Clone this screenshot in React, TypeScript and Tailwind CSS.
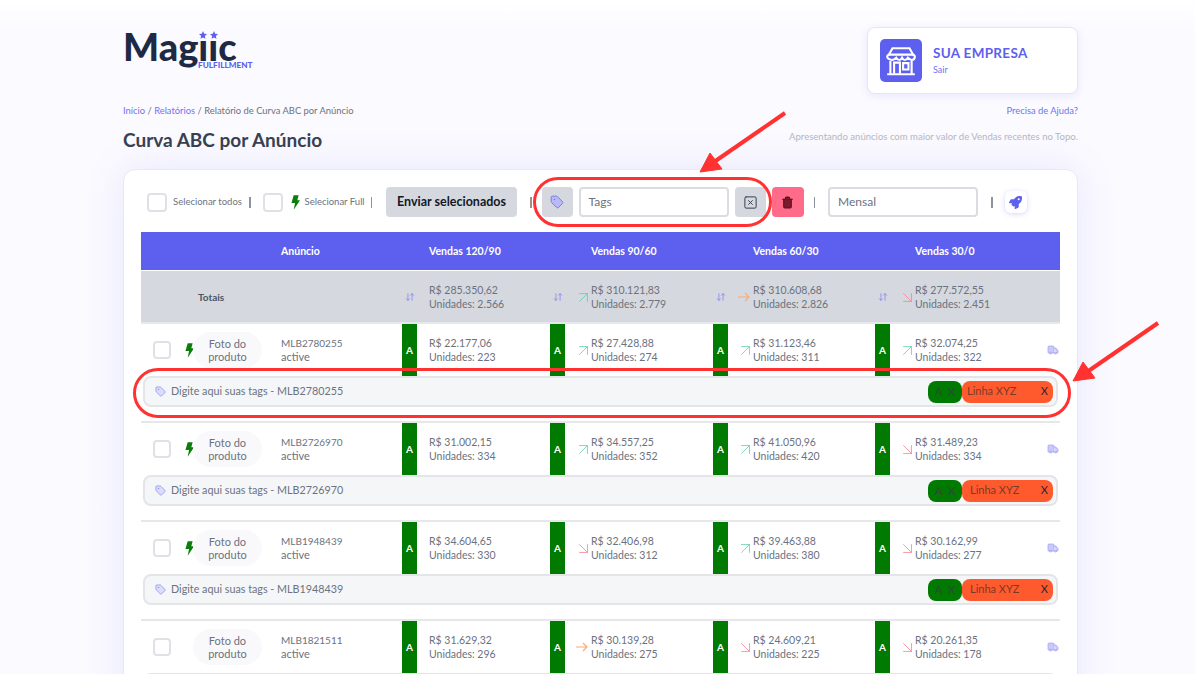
import { Tag, SquareX, Trash2, Truck, ArrowUpRight, ArrowDownRight, ArrowDownUp } from "lucide-react";
import { FaRocket } from "react-icons/fa";

const rows = [
  {
    id: "MLB2780255",
    full: true,
    sales: [
      { value: "22.177,06", units: "223", trend: "" },
      { value: "27.428,88", units: "274", trend: "up" },
      { value: "31.123,46", units: "311", trend: "up" },
      { value: "32.074,25", units: "322", trend: "up" },
    ],
  },
  {
    id: "MLB2726970",
    full: true,
    sales: [
      { value: "31.002,15", units: "334", trend: "" },
      { value: "34.557,25", units: "352", trend: "up" },
      { value: "41.050,96", units: "420", trend: "up" },
      { value: "31.489,23", units: "334", trend: "down" },
    ],
  },
  {
    id: "MLB1948439",
    full: true,
    sales: [
      { value: "34.604,65", units: "330", trend: "" },
      { value: "32.406,98", units: "312", trend: "down" },
      { value: "39.463,88", units: "380", trend: "up" },
      { value: "30.162,99", units: "277", trend: "down" },
    ],
  },
  {
    id: "MLB1821511",
    full: false,
    sales: [
      { value: "31.629,32", units: "296", trend: "" },
      { value: "30.139,28", units: "275", trend: "right" },
      { value: "24.609,21", units: "225", trend: "down" },
      { value: "20.261,35", units: "178", trend: "down" },
    ],
  },
];

const totals = [
  { value: "285.350,62", units: "2.566", trend: "" },
  { value: "310.121,83", units: "2.779", trend: "up" },
  { value: "310.608,68", units: "2.826", trend: "right" },
  { value: "277.572,55", units: "2.451", trend: "down" },
];

const gridCols = "grid grid-cols-[261px_148px_163px_162px_185px]";
const arrowCols = ["w-[12px]", "w-[26px]", "w-[25px]", "w-[25px]"];
const headCols = ["pl-[27px]", "pl-[41px]", "pl-[40px]", "pl-[40px]"];

function Bolt({ className }: { className?: string }) {
  return (
    <svg viewBox="0 0 10 16" className={className} fill="#0a7d0a">
      <path d="M3 0h5.500L7 5.500h3L3 16l1.500-7.500H.5z" />
    </svg>
  );
}

function Trend({ trend }: { trend: string }) {
  if (trend === "up") return <ArrowUpRight size={19} strokeWidth={1} className="-mr-[2px] text-[#5fcfae]" />;
  if (trend === "down") return <ArrowDownRight size={19} strokeWidth={1} className="-mr-[2px] text-[#fb7f94]" />;
  if (trend === "right")
    return (
      <svg viewBox="0 0 12 10" className="mr-[3px] h-[10px] w-[12px]" fill="none" stroke="#ffa86e" strokeWidth="1.100">
        <path d="M0 5h11M7 1l4 4-4 4" />
      </svg>
    );
  return null;
}

function Amount({ value, units }: { value: string; units: string }) {
  return (
    <div className="text-[10.500px] leading-[14px] text-[#6b7280]">
      <div>R$ {value}</div>
      <div>Unidades: {units}</div>
    </div>
  );
}

function Store() {
  return (
    <div className="flex h-[43px] w-[42px] items-center justify-center rounded-[5px] bg-[#5d5fef]">
      <svg viewBox="0 0 32 32" className="h-[34px] w-[34px]" fill="none" stroke="#fff" strokeWidth="2">
        <path d="M4 11 8 4h16l4 7" />
        <path d="M3 12c0-1 1-2 2-2h22c1 0 2 1 2 2 0 2-1.500 3-3 3s-2.500-1-3.500-2c-.5 1-2 2-3 2s-2-1-2.500-2c-.5 1-1.500 2-2.500 2s-2.500-1-3-2c-1 1-2 2-3.500 2S3 14 3 12z" />
        <path d="M6 16v12M26 16v12M3 28.500h26" />
        <path d="M9.500 28V17.500h5.500V28" />
        <path d="M18 18h5v6h-5z" />
      </svg>
    </div>
  );
}

function Divider({ className }: { className?: string }) {
  return <div className={`h-[11px] w-[1.500px] bg-[#8b93a1] ${className}`} />;
}

function ProductRow({ row, index }: { row: (typeof rows)[number]; index: number }) {
  return (
    <div className="border-t-2 border-[#e5e7eb] mb-[14px]">
      <div className={`${gridCols} h-[52px]`}>
        <div className="flex items-center">
          <div className="ml-[12px] h-[18px] w-[18px] rounded-[4px] border-2 border-[#dfe1e6] bg-white" />
          <div className="ml-[14px] w-[10px]">{row.full && <Bolt className="h-[15px] w-[9px]" />}</div>
          <div className="ml-[-2px] flex h-[36px] w-[69px] items-center justify-center rounded-[18px] bg-[#f9f9fb] text-center text-[11px] leading-[13px] text-[#6b7280]">
            Foto do
            <br />
            produto
          </div>
          <div className="ml-[19px] leading-[14px] text-[#6b7280]">
            <div className="text-[10px]">{row.id}</div>
            <div className="text-[11px]">active</div>
          </div>
        </div>
        {row.sales.map((s, i) => (
          <div key={i} className="flex">
            <div className="flex w-[15px] items-center justify-center bg-[#007a00] text-[10px] font-bold text-white">
              A
            </div>
            <div className={`flex items-center justify-end ${arrowCols[i]}`}>
              <Trend trend={s.trend} />
            </div>
            <div className="flex items-center">
              <Amount value={s.value} units={s.units} />
            </div>
            {i === 3 && (
              <div className="ml-auto flex items-center pr-[1px]">
                <Truck size={12} strokeWidth={1.5} className="text-[#a5a6f6]" fill="#c9caf9" />
              </div>
            )}
          </div>
        ))}
      </div>
      <div className="mx-[2px] flex h-[31px] items-center rounded-[8px] border-2 border-[#e3e5e8] bg-[#f5f6f8] pl-[10px] pr-[3px]">
        {row.full && (
          <>
            <Tag size={11} strokeWidth={1.5} className="text-[#8385f2]" fill="#dcdcfb" />
            <span className="ml-[5px] text-[10.750px] text-[#6b7280]">Digite aqui suas tags - {row.id}</span>
            <div className="ml-auto flex h-[22px] text-[11px]">
              <div className="flex w-[34px] items-center justify-center gap-[5px] rounded-[8px] bg-[#007a00] text-[12px] text-[#2f4a35]">
                <span>A</span>
                <span>X</span>
              </div>
              <div
                className={`flex w-[91px] items-center justify-between rounded-[8px] bg-[#ff5a2d] pr-[5px] text-[#7a3a28] ${
                  index === 0 ? "pl-[5px]" : "pl-[8px]"
                }`}
              >
                <span>Linha XYZ</span>
                <span className="text-[#1f2937]">X</span>
              </div>
            </div>
          </>
        )}
      </div>
    </div>
  );
}

export default function App() {
  return (
    <div className="relative h-[674px] overflow-hidden bg-gradient-to-b from-white via-[#fbfaff] via-[5%] to-[#fbfaff] font-['Lato','Noto_Sans',sans-serif]">
      <div className="ml-[123px] w-[955px] pt-[27px]">
        {/* Top */}
        <div className="flex h-[68px] items-start justify-between">
          <div className="relative">
            <div className="mt-[4px] text-[38px] font-black leading-[30px] text-[#1e2a44]">Magııc</div>
            <div className="absolute left-[76px] top-[4px] flex gap-[3px]">
              <Star />
              <Star />
            </div>
            <div className="absolute left-[75px] top-[34px] text-[8.200px] font-black leading-none text-[#5d5fef]">FULFILLMENT</div>
          </div>
          <div className="flex h-[67px] w-[211px] items-center rounded-[8px] border border-[#e5e7f0] bg-white pl-[12px] shadow-[0_2px_8px_rgba(93,95,239,0.12)]">
            <Store />
            <div className="ml-[11px]">
              <div className="-mt-[1px] text-[13.500px] font-bold leading-[18px] tracking-[0.3px] text-[#5d5fef]">SUA EMPRESA</div>
              <div className="mt-[1px] text-[9px] leading-[14px] text-[#7173f2]">Sair</div>
            </div>
          </div>
        </div>

        <div className="mt-[10px] flex h-[12px] items-center justify-between text-[9.400px]">
          <div className="text-[#6b7280]">
            <span className="text-[#7173f2]">Início</span> / <span className="text-[#7173f2]">Relatórios</span> / Relatório de Curva ABC por Anúncio
          </div>
          <div className="text-[#7173f2]">Precisa de Ajuda?</div>
        </div>
        <div className="mt-[9px] flex h-[28px] items-center justify-between">
          <h1 className="text-[19px] font-bold text-[#374151]">Curva ABC por Anúncio</h1>
          <div className="pb-[6px] text-[9.550px] text-[#b4b7bf]">Apresentando anúncios com maior valor de Vendas recentes no Topo.</div>
        </div>

        {/* Card */}
        <div className="mt-[15px] h-[600px] rounded-[12px] border border-[#e6e8f5] bg-white px-[17px] pt-[17px] shadow-[0_0_40px_rgba(93,95,239,0.12)]">
          <div className="flex h-[30px] items-center text-[#6b7280]">
            <div className="ml-[6px] h-[19px] w-[20px] rounded-[4px] border-2 border-[#dfe1e6] bg-white" />
            <span className="ml-[6px] w-[70px] whitespace-nowrap text-[9.500px]">Selecionar todos</span>
            <Divider className="ml-[6px]" />
            <div className="ml-[12px] h-[19px] w-[20px] rounded-[4px] border-2 border-[#dfe1e6] bg-white" />
            <Bolt className="ml-[8px] h-[15px] w-[9px]" />
            <span className="ml-[5px] w-[60px] whitespace-nowrap text-[9.500px]">Selecionar Full</span>
            <Divider className="ml-[6px]" />
            <button className="ml-[14px] h-[30px] w-[131px] rounded-[4px] bg-[#d5d8de] text-[12.500px] font-bold text-[#111827]">
              Enviar selecionados
            </button>
            <Divider className="ml-[13px] bg-[#a38c8c]" />
            <div className="ml-[10px] flex h-[30px] w-[31px] items-center justify-center rounded-[4px] bg-[#d5d8de]">
              <Tag size={14} strokeWidth={1.5} className="text-[#6d6ff0]" fill="#b9baf7" />
            </div>
            <div className="ml-[6px] flex h-[30px] w-[150px] items-center rounded-[4px] border-2 border-[#d9dce1] bg-white pl-[8px] text-[12px]">
              Tags
            </div>
            <div className="ml-[6px] flex h-[30px] w-[31px] items-center justify-center rounded-[4px] bg-[#d5d8de]">
              <SquareX size={15} strokeWidth={1.6} className="text-[#374151]" />
            </div>
            <div className="ml-[6px] flex h-[30px] w-[32px] items-center justify-center rounded-[4px] bg-[#ff6b88]">
              <Trash2 size={13} strokeWidth={2} className="text-[#5b1020]" fill="#7a1a2c" />
            </div>
            <Divider className="ml-[10px]" />
            <div className="ml-[13px] flex h-[30px] w-[150px] items-center rounded-[4px] border-2 border-[#d9dce1] bg-white pl-[8px] text-[12px]">
              Mensal
            </div>
            <Divider className="ml-[13px]" />
            <div className="ml-[12px] flex h-[22px] w-[22px] items-center justify-center rounded-[6px] bg-white shadow-[0_1px_5px_rgba(93,95,239,0.25)]">
              <FaRocket size={13} className="text-[#5d5fef]" />
            </div>
          </div>

          {/* Table */}
          <div className={`${gridCols} mt-[15px] h-[38px] items-center bg-[#5d5fef] pt-[2px] text-[10.500px] font-bold text-white`}>
            <div className="pl-[140px]">Anúncio</div>
            {["Vendas 120/90", "Vendas 90/60", "Vendas 60/30", "Vendas 30/0"].map((h, i) => (
              <div key={h} className={headCols[i]}>
                {h}
              </div>
            ))}
          </div>
          <div className={`${gridCols} mt-[1px] h-[51px] bg-[#d5d8de] pt-[1px]`}>
            <div className="flex items-center pl-[57px] text-[10px] font-bold text-[#4b5563]">Totais</div>
            {totals.map((t, i) => (
              <div key={i} className="flex items-center">
                <div className="flex w-[15px] justify-center">
                  <ArrowDownUp size={10} strokeWidth={1.5} className="text-[#7173f2]" />
                </div>
                <div className={`flex justify-end ${arrowCols[i]}`}>
                  <Trend trend={t.trend} />
                </div>
                <Amount value={t.value} units={t.units} />
              </div>
            ))}
          </div>
          {rows.map((row, i) => (
            <ProductRow key={row.id} row={row} index={i} />
          ))}
        </div>
      </div>

      {/* Anotacoes em vermelho */}
      <div className="absolute left-[533px] top-[177px] h-[50px] w-[239px] rounded-[25px] border-[3px] border-[#ff3131]" />
      <div className="absolute left-[133px] top-[368px] h-[50px] w-[938px] rounded-[25px] border-[3px] border-[#ff3131]" />
      <svg className="absolute left-0 top-0 h-[674px] w-[1195px]" viewBox="0 0 1195 674" fill="#ff3131" stroke="#ff3131">
        <path d="M785 113 714 162" strokeWidth="4" fill="none" />
        <path d="M700 172 710 153 722 169z" strokeWidth="1" />
        <path d="M1158 323 1087 372" strokeWidth="4" fill="none" />
        <path d="M1073 381 1083 362 1095 378z" strokeWidth="1" />
      </svg>
    </div>
  );
}

function Star() {
  return (
    <svg viewBox="0 0 10 10" className="h-[8px] w-[8px]" fill="#5d5fef">
      <path d="M5 0l1.500 3.400 3.500.4-2.600 2.400.7 3.600L5 8 1.900 9.800l.7-3.600L0 3.800l3.500-.4z" />
    </svg>
  );
}
